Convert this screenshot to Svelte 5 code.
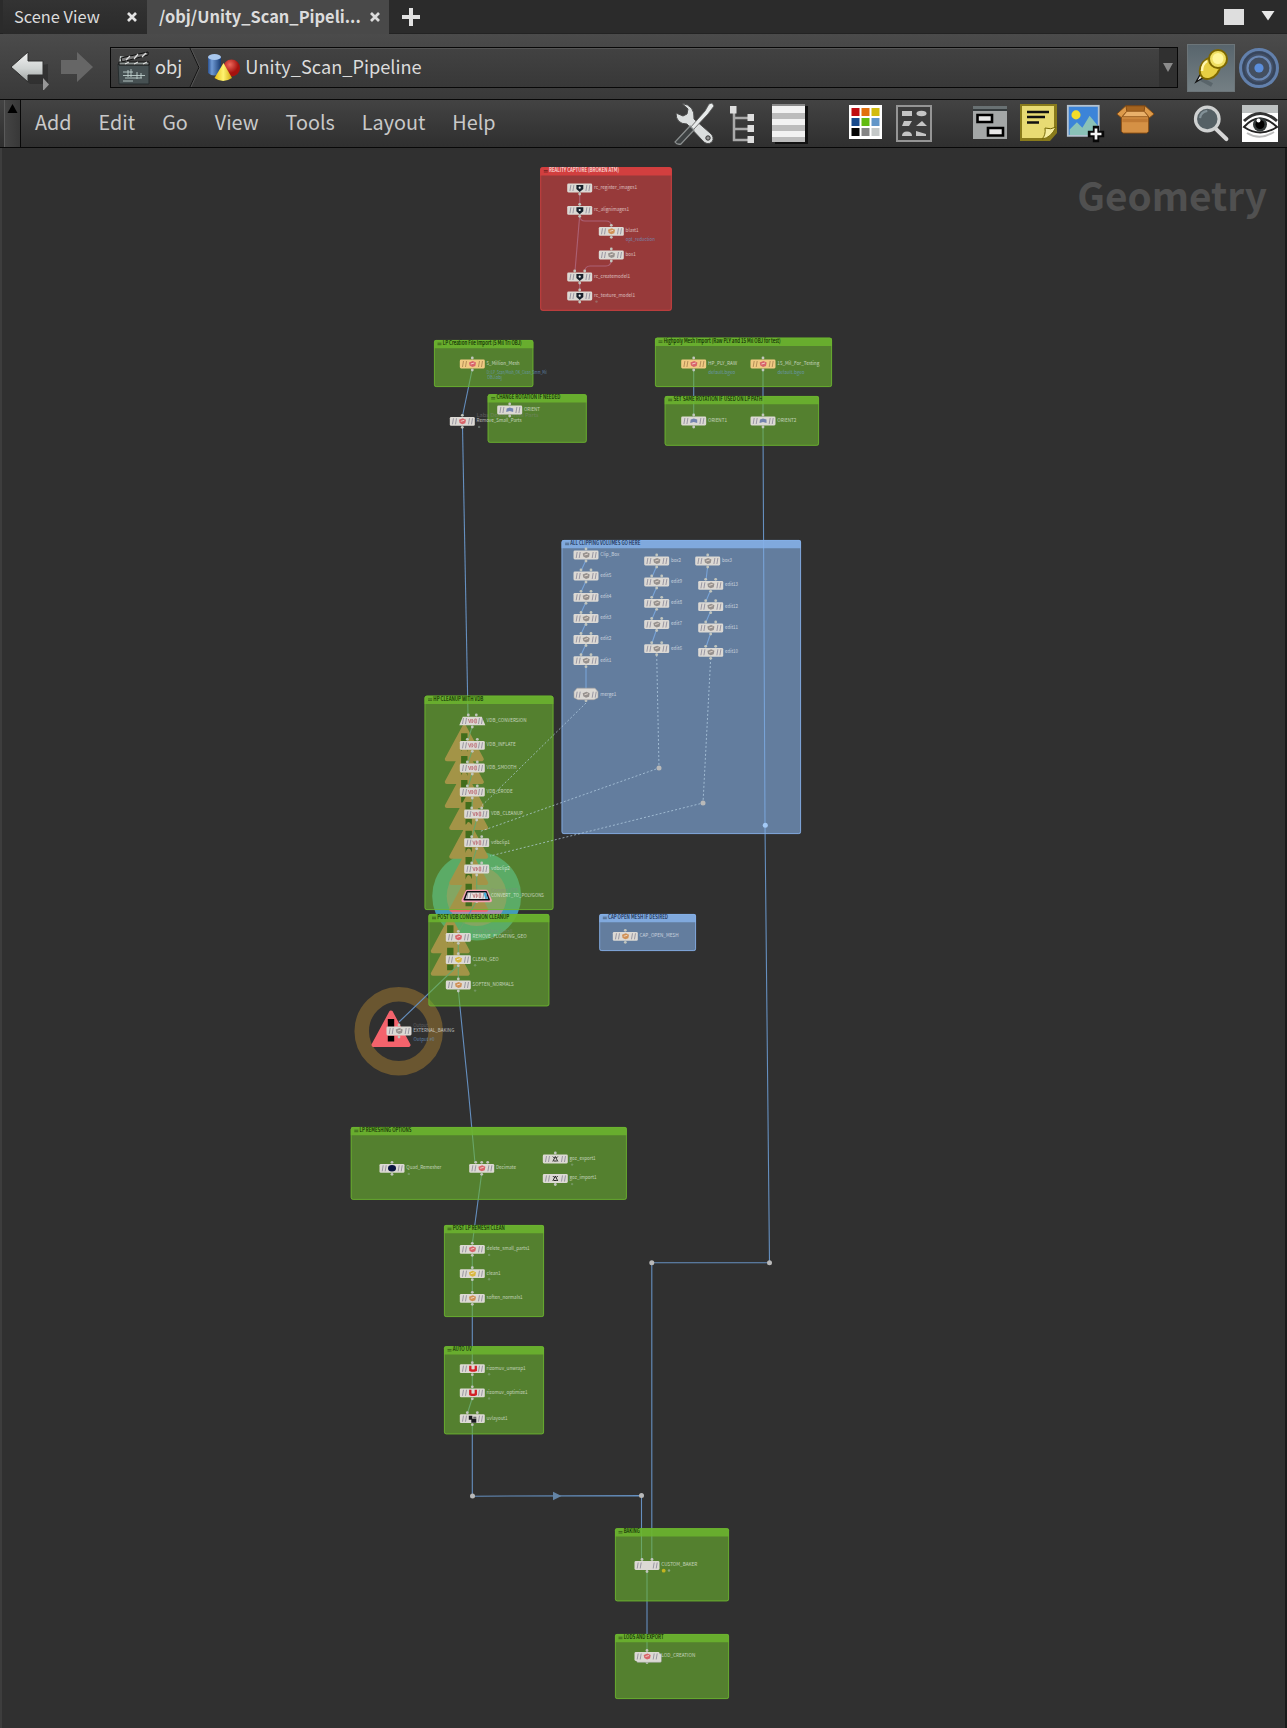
<script>
    const menus = ["Add", "Edit", "Go", "View", "Tools", "Layout", "Help"];

    const palette = [
        "#c00d10", "#e2700c", "#d3bb0e",
        "#184a8c", "#62bb10", "#6296c8",
        "#050505", "#858585", "#c4c8c8",
    ];

    const tints = { green: "#6cb52e", blue: "#85b0e8", red: "#dc4141" };

    // x, y, width, height, title, title width
    const boxes = [
        { x: 540.3, y: 167.3, w: 131.4, h: 143.4, tint: "red", title: "REALITY CAPTURE (BROKEN ATM)", tw: 70 },
        { x: 434, y: 340, w: 99.3, h: 47, tint: "green", title: "LP Creation File Import (5 Mil Tri OBJ)", tw: 79 },
        { x: 487.7, y: 394.3, w: 99, h: 48.4, tint: "green", title: "CHANGE ROTATION IF NEEDED", tw: 64 },
        { x: 655, y: 337.7, w: 177, h: 49.3, tint: "green", title: "Highpoly Mesh Import (Raw PLY and 15 Mil OBJ for test)", tw: 117 },
        { x: 664.7, y: 396, w: 154.3, h: 49.7, tint: "green", title: "SET SAME ROTATION IF USED ON LP PATH", tw: 89 },
        { x: 561.6, y: 540, w: 239.4, h: 294, tint: "blue", title: "ALL CLIPPING VOLUMES GO HERE", tw: 70 },
        { x: 424.6, y: 695.7, w: 128.8, h: 214.3, tint: "green", title: "HP CLEANUP WITH VDB", tw: 50 },
        { x: 428.5, y: 914, w: 120.8, h: 92.3, tint: "green", title: "POST VDB CONVERSION CLEANUP", tw: 72 },
        { x: 599.3, y: 914, w: 96.7, h: 37, tint: "blue", title: "CAP OPEN MESH IF DESIRED", tw: 60 },
        { x: 350.8, y: 1127, w: 276, h: 72.8, tint: "green", title: "LP REMESHING OPTIONS", tw: 52 },
        { x: 444, y: 1225, w: 100, h: 92, tint: "green", title: "POST LP REMESH CLEAN", tw: 52 },
        { x: 444, y: 1346.3, w: 100, h: 88, tint: "green", title: "AUTO UV", tw: 19 },
        { x: 615, y: 1528.3, w: 114, h: 73, tint: "green", title: "BAKING", tw: 16 },
        { x: 615, y: 1634, w: 114, h: 65, tint: "green", title: "LODS AND EXPORT", tw: 40 },
    ];

    // x, y of the node, name, name width, icon colour, offsets of the inputs
    const nodes = [
        { x: 579.7, y: 188, name: "rc_register_images1", nw: 43, icon: "dark", ins: [] },
        { x: 579.7, y: 210.3, name: "rc_alignimages1", nw: 35, icon: "dark" },
        { x: 611.3, y: 231.3, name: "blast1", nw: 13, icon: "orange", sub: "opt_reduction", sw: 29 },
        { x: 611.3, y: 255, name: "box1", nw: 10, icon: "grey" },
        { x: 579.7, y: 277, name: "rc_createmodel1", nw: 36, icon: "dark", ins: [-5, 5] },
        { x: 579.7, y: 296, name: "rc_texture_model1", nw: 41, icon: "dark", tag: true },
        { x: 472.3, y: 364, name: "5_Million_Mesh", nw: 33, icon: "red", file: true, sub: "D:/LP_Scan/Mesh_OK_Clean_5mm_Mil", sw: 60 },
        { x: 462.3, y: 421.3, name: "Remove_Small_Parts", nw: 45, icon: "red", type: "Labs Delete Small Parts", typeW: 62, tag: true },
        { x: 509.7, y: 410, name: "ORIENT", nw: 16, icon: "blue" },
        { x: 693.7, y: 364, name: "HP_PLY_RAW", nw: 29, icon: "red", file: true, sub: "default.bgeo", sw: 27 },
        { x: 763, y: 364, name: "15_Mil_For_Testing", nw: 42, icon: "red", file: true, sub: "default.bgeo", sw: 27 },
        { x: 693.7, y: 421, name: "ORIENT1", nw: 19, icon: "blue" },
        { x: 763, y: 421, name: "ORIENT2", nw: 19, icon: "blue" },
        { x: 586, y: 555, name: "Clip_Box", nw: 19, icon: "grey" },
        { x: 586, y: 576, name: "edit5", nw: 11, icon: "grey", ins: [-5, 5] },
        { x: 586, y: 597.3, name: "edit4", nw: 11, icon: "grey", ins: [-5, 5] },
        { x: 586, y: 618.5, name: "edit3", nw: 11, icon: "grey", ins: [-5, 5] },
        { x: 586, y: 639.5, name: "edit2", nw: 11, icon: "grey", ins: [-5, 5] },
        { x: 586, y: 660.7, name: "edit1", nw: 11, icon: "grey", ins: [-5, 5] },
        { x: 586, y: 694.7, name: "merge1", nw: 16, icon: "grey", shape: "merge", ins: [] },
        { x: 656.7, y: 561, name: "box2", nw: 10, icon: "grey" },
        { x: 656.7, y: 582, name: "edit9", nw: 11, icon: "grey", ins: [-5, 5] },
        { x: 656.7, y: 603.3, name: "edit8", nw: 11, icon: "grey", ins: [-5, 5] },
        { x: 656.7, y: 624.5, name: "edit7", nw: 11, icon: "grey", ins: [-5, 5] },
        { x: 656.7, y: 648.7, name: "edit6", nw: 11, icon: "grey", ins: [-5, 5] },
        { x: 707.7, y: 561, name: "box3", nw: 10, icon: "grey" },
        { x: 710.7, y: 585.3, name: "edit13", nw: 13, icon: "grey", ins: [-5, 5] },
        { x: 710.7, y: 606.7, name: "edit12", nw: 13, icon: "grey", ins: [-5, 5] },
        { x: 710.7, y: 628, name: "edit11", nw: 13, icon: "grey", ins: [-5, 5] },
        { x: 710.7, y: 652.3, name: "edit10", nw: 13, icon: "grey", ins: [-5, 5] },
        { x: 472.3, y: 721, name: "VDB_CONVERSION", nw: 40, icon: "vdb", shape: "trapezoid", ins: [-4, 4] },
        { x: 472.3, y: 745.3, name: "VDB_INFLATE", nw: 29, icon: "vdb", warn: true, ins: [-5, 5] },
        { x: 472.3, y: 768, name: "VDB_SMOOTH", nw: 30, icon: "vdb", warn: true, ins: [-5, 5] },
        { x: 472.3, y: 792, name: "VDB_ERODE", nw: 26, icon: "vdb", warn: true, ins: [-5, 5] },
        { x: 476.7, y: 814, name: "VDB_CLEANUP", nw: 32, icon: "vdb", warn: true, ins: [-5, 5] },
        { x: 476.7, y: 842.7, name: "vdbclip1", nw: 19, icon: "vdb", warn: true, ins: [-5, 5] },
        { x: 476.7, y: 869, name: "vdbclip2", nw: 19, icon: "vdb", warn: true, ins: [-5, 5] },
        { x: 476.7, y: 895.7, name: "CONVERT_TO_POLYGONS", nw: 53, icon: "vdb", shape: "selected", warn: true, type: "Convert VDB", typeW: 27, ins: [] },
        { x: 458.3, y: 937.3, name: "REMOVE_FLOATING_GEO", nw: 54, icon: "red", warn: true, type: "Labs Delete Small", typeW: 40 },
        { x: 458.3, y: 959.7, name: "CLEAN_GEO", nw: 26, icon: "yellow", warn: true, tag: true },
        { x: 458.3, y: 985, name: "SOFTEN_NORMALS", nw: 41, icon: "orange", tag: true },
        { x: 399, y: 1031, name: "EXTERNAL_BAKING", nw: 41, icon: "grey", warn: true, type: "Output", typeW: 15, sub: "Output #0", sw: 21 },
        { x: 625.3, y: 936.3, name: "CAP_OPEN_MESH", nw: 39, icon: "orange" },
        { x: 392, y: 1168.3, name: "Quad_Remesher", nw: 35, icon: "navy", tag: true },
        { x: 481.7, y: 1168.3, name: "Decimate", nw: 20, icon: "red", ins: [-6, 0, 6] },
        { x: 555.3, y: 1159, name: "goz_export1", nw: 26, icon: "black", tag: true, outs: false },
        { x: 555.3, y: 1178.5, name: "goz_import1", nw: 27, icon: "black", tag: true, ins: [] },
        { x: 472.3, y: 1249.3, name: "delete_small_parts1", nw: 43, icon: "red", tag: true },
        { x: 472.3, y: 1273.7, name: "clean1", nw: 14, icon: "yellow", tag: true },
        { x: 472.3, y: 1298.3, name: "soften_normals1", nw: 36, icon: "orange" },
        { x: 472.3, y: 1368.7, name: "rizomuv_unwrap1", nw: 39, icon: "magnet", tag: true },
        { x: 472.3, y: 1392.8, name: "rizomuv_optimize1", nw: 41, icon: "magnet", tag: true },
        { x: 472.3, y: 1418.7, name: "uvlayout1", nw: 21, icon: "layout", ins: [-5, 5] },
        { x: 647, y: 1565.5, name: "CUSTOM_BAKER", nw: 36, icon: "none", ins: [-5, 5] },
        { x: 647, y: 1656.5, name: "LOD_CREATION", nw: 34, icon: "red", shape: "stack" },
    ];

    const iconColors = {
        orange: "#cf9055", grey: "#96918e", red: "#d8646a", yellow: "#d9b740",
    };

    const wires = [
        "M579.7 193V206", "M579.7 215.5L575 271", "M579.7 216Q580 221 585 221H606Q611 221 611.3 226",
        "M611.3 260Q611 266 606 266H590Q585 266 584.7 272", "M579.7 282V291",
        "M472.3 369L462.5 416", "M462.5 427L468 716",
        "M693.7 369V416", "M763 369V416", "M763 426L765 825.3L769.5 1262.8H651.8V1560",
        "M586 560L581 571M586 581L581 592M586 602L581 613M586 623L581 634M586 644L581 655M586 666V689",
        "M656.7 566L652 577M656.7 587L652 598M656.7 608L652 619M656.7 629L652 643",
        "M707.7 566L706 580M710.7 590L706 601M710.7 611L706 622M710.7 633L706 647",
        "M472.3 726L468 740M472.3 750L468 763M472.3 773L468 787M472.3 797L472 809M476.7 819L472 837M476.7 848L472 864M476.7 874V890M476.7 901L458.3 932",
        "M458.3 943V955", "M458.3 965V980", "M458.3 965L399 1022",
        "M458.3 990L468.3 1090L475 1163", "M481.7 1173L472.3 1244",
        "M472.3 1255V1269M472.3 1279V1293M472.3 1303V1363M472.3 1374V1387M472.3 1398L467.5 1413",
        "M472.3 1424V1496.2L641.5 1495.6V1560", "M647 1571V1651",
    ];

    const dotted = [
        "M586 703L481 806.5",
        "M656.7 655L659 768L480 831.5",
        "M710.7 658L703 803L490 856",
    ];

    const pins = [
        { x: 659, y: 768 }, { x: 703, y: 803 }, { x: 765.3, y: 825.3, on: true },
        { x: 769.5, y: 1262.8 }, { x: 651.8, y: 1262.8 },
        { x: 472.5, y: 1496 }, { x: 641.5, y: 1495.6 },
    ];

    const warned = nodes.filter((n) => n.warn);
</script>

<div class="pane">
    <div class="tabs">
        <div class="tab">
            <span>Scene View</span>
            <svg width="10" height="10" viewBox="0 0 10 10"><path d="M1 1L9 9M9 1L1 9" stroke="#e4e4e4" stroke-width="2.7" /></svg>
        </div>
        <div class="tab active">
            <span>/obj/Unity_Scan_Pipeli...</span>
            <svg width="10" height="10" viewBox="0 0 10 10"><path d="M1 1L9 9M9 1L1 9" stroke="#dcdcdc" stroke-width="2.7" /></svg>
        </div>
        <svg class="plus" width="20" height="20" viewBox="0 0 20 20"><path d="M10 1V19M1 10H19" stroke="#e2e2e2" stroke-width="4" /></svg>
        <svg class="corner" width="52" height="18" viewBox="0 0 52 18">
            <rect x="1" y="1" width="20" height="16" fill="#dedede" />
            <path d="M38.5 3H51.5L45 12.5Z" fill="#e8e8e8" />
        </svg>
    </div>

    <div class="pathbar">
        <svg class="arrows" width="86" height="44" viewBox="0 0 86 44">
            <defs>
                <linearGradient id="back" x1="0" y1="0" x2="0" y2="1">
                    <stop offset="0" stop-color="#f2f2f2" />
                    <stop offset=".55" stop-color="#cfd3d2" />
                    <stop offset="1" stop-color="#9ea3a2" />
                </linearGradient>
            </defs>
            <path d="M4 24L20 38H38V18Z" fill="#222" opacity=".45" />
            <path d="M1 21L18 6V15H33V29H18V36Z" fill="url(#back)" stroke="#303030" stroke-width="1" />
            <path d="M83 21L67 6V14H51V28H67V36Z" fill="#666" />
            <path d="M33 32V45L39 38.500Z" fill="#979797" />
        </svg>
        <div class="path">
            <svg width="34" height="34" viewBox="0 0 34 34">
                <path d="M1 13H32V33H2Z" fill="#465052" stroke="#262d2e" />
                <path d="M2 13L3 5L8 6L12 13Z" fill="#c4cbca" />
                <path d="M4 7L31 1V4L5 11Z" fill="#777" stroke="#0d0d0d" />
                <path d="M9 9L13 5M17 8L21 3M25 6L29 2" stroke="#ddd" stroke-width="1.3" />
                <path d="M2 11H32V14H2Z" fill="#8b9290" stroke="#111" />
                <path d="M8 13L12 11M17 13L21 11M26 13L30 11" stroke="#eee" />
                <path d="M6 21H16M6 24.500H28M8 27H25M6 30H16M11 19V26M14 18V26M20 21V28M24 22V27" stroke="#bfd0ce" stroke-width=".9" />
            </svg>
            <span>obj</span>
            <svg class="chevron" width="12" height="39" viewBox="0 0 12 39"><path d="M1 0L10 19.500L1 39" fill="none" stroke="#111" /><path d="M2 0L11 19.500L2 39" fill="none" stroke="#555" /></svg>
            <svg class="shapes" width="34" height="30" viewBox="0 0 34 30">
                <defs>
                    <linearGradient id="cyl"><stop offset="0" stop-color="#2b5291" /><stop offset=".3" stop-color="#6f9ad4" /><stop offset="1" stop-color="#173a70" /></linearGradient>
                    <radialGradient id="ball" cx=".4" cy=".3"><stop offset="0" stop-color="#ef6a5c" /><stop offset="1" stop-color="#a5120e" /></radialGradient>
                    <linearGradient id="cone"><stop offset="0" stop-color="#e8bd12" /><stop offset=".5" stop-color="#fff370" /><stop offset="1" stop-color="#d2a90e" /></linearGradient>
                </defs>
                <path d="M1 4V20Q7 25 14 20V4Z" fill="url(#cyl)" />
                <ellipse cx="7.500" cy="4" rx="6.500" ry="3" fill="#a9c8ee" />
                <circle cx="24.500" cy="15" r="8.500" fill="url(#ball)" />
                <path d="M16.500 10L25 25Q16 31 7.500 25Z" fill="url(#cone)" />
            </svg>
            <span>Unity_Scan_Pipeline</span>
            <div class="drop"><svg width="10" height="9" viewBox="0 0 10 9"><path d="M0 0H10L5 9Z" fill="#8b8b8b" /></svg></div>
        </div>
        <div class="pin">
            <svg width="46" height="46" viewBox="0 0 46 46">
                <path d="M13 34L24 40" stroke="#4c575d" stroke-width="4" opacity=".6" />
                <path d="M8 37L13 28L18 31Z" fill="#eee" stroke="#111" stroke-width="1.3" />
                <ellipse cx="22" cy="23" rx="9" ry="12" transform="rotate(38 22 23)" fill="#e7cf43" stroke="#7e6800" stroke-width="2" />
                <path d="M20 16L30 25L34 19L26 10Z" fill="#dcc238" />
                <circle cx="30" cy="14" r="9" fill="#f0df62" stroke="#7e6800" stroke-width="2" />
                <circle cx="30" cy="13.500" r="5.500" fill="#fff59a" />
                <path d="M14 26Q14 19 19 16" fill="none" stroke="#fff7b0" stroke-width="2.500" />
            </svg>
        </div>
        <svg class="target" width="42" height="42" viewBox="0 0 42 42">
            <circle cx="21" cy="21" r="18.500" fill="#435066" stroke="#6280ac" stroke-width="3" />
            <circle cx="21" cy="21" r="15.500" fill="none" stroke="#37455c" stroke-width="2" />
            <circle cx="21" cy="21" r="11.500" fill="none" stroke="#6b88b4" stroke-width="2.200" />
            <circle cx="21" cy="21" r="10" fill="#444f60" />
            <circle cx="21" cy="21" r="4.600" fill="#5b8edb" />
        </svg>
    </div>

    <div class="menubar">
        <div class="grip"><svg width="12" height="10" viewBox="0 0 12 10"><path d="M5.500 0L10.500 9H.5Z" fill="#000" /></svg></div>
        <nav>
            {#each menus as menu}
                <span>{menu}</span>
            {/each}
        </nav>
        <div class="tools">
            <div class="group">
                <svg width="40" height="44" viewBox="0 0 40 44">
                    <path d="M8 1.500L14 7L13 12L9 14L2 11Q2 22 13 22L28 38Q33 44 38 40Q41 35 36 31L20 17Q21 3 8 1.500Z" fill="#dcdfdf" stroke="#4a4a4a" stroke-width="1" />
                    <circle cx="34" cy="36" r="2.200" fill="#999" stroke="#333" />
                    <path d="M38 1L35 2L31 9L16 26L19 28L34 12L40 4Z" fill="#e7eaea" stroke="#555" stroke-width=".8" />
                    <path d="M16 24L20 28L7 42Q3 43 1 40Z" fill="#3d4142" stroke="#8b8f8f" stroke-width="1.300" />
                </svg>
                <svg width="40" height="44" viewBox="0 0 40 44">
                    <path d="M12 10V38H26M12 16H26M12 27H26" fill="none" stroke="#aaa" stroke-width="2.500" />
                    <path d="M8 4H14.500V11.500H8ZM25.500 12H32V19H25.500ZM25.500 23H32V30H25.500ZM25.500 34H32V41H25.500Z" fill="#dedede" />
                </svg>
                <svg width="40" height="44" viewBox="0 0 40 44">
                    <rect x="4" y="4" width="33" height="38" fill="#111" />
                    <rect x="1" y="2" width="33" height="38" fill="#f2f2f2" />
                    <path d="M1 11H34V17H1ZM1 23H34V29H1ZM1 35H34V40H1Z" fill="#bcbcbc" />
                    <rect x="1" y="2" width="33" height="2" fill="#8a8a8a" />
                </svg>
            </div>
            <div class="group">
                <svg width="40" height="44" viewBox="0 0 40 44">
                    <rect x="3" y="3" width="33" height="34" fill="#fff" />
                    {#each palette as color, i}
                        <rect x={5.5 + (i % 3) * 10} y={6 + Math.floor(i / 3) * 10} width="8" height="8" fill={color} />
                    {/each}
                </svg>
                <svg width="40" height="44" viewBox="0 0 40 44">
                    <rect x="3" y="4" width="34" height="35" fill="#3c3c3c" stroke="#959595" stroke-width="2" />
                    <path d="M8 9H18V14H8ZM10 19H18L15 24H8ZM28 19L33 24H22ZM8 34Q8 29.500 13 29.500Q18 29.500 18 34ZM22 29L32 32V34H22Z" fill="#c5c5c5" />
                    <ellipse cx="27.500" cy="11.500" rx="5" ry="2.800" fill="#c5c5c5" />
                </svg>
            </div>
            <div class="group">
                <svg width="40" height="44" viewBox="0 0 40 44">
                    <rect x="4" y="4" width="34" height="33" fill="#a4a7a7" />
                    <rect x="4" y="4" width="34" height="3" fill="#697173" />
                    <rect x="4" y="7" width="34" height="2" fill="#353b3d" />
                    <path d="M8.500 13H23V20H8.500ZM19 26H34V33.500H19Z" fill="#e8e8e8" stroke="#000" stroke-width="2.600" />
                </svg>
                <svg width="40" height="44" viewBox="0 0 40 44">
                    <path d="M2 2H39V31L32 39H2Z" fill="#897b1c" />
                    <path d="M4 4H36V27L28 36H4Z" fill="#e8db73" />
                    <path d="M24 37Q28 33 27 26Q33 28 38 25Q33 36 24 37Z" fill="#f5eda0" stroke="#766906" />
                    <path d="M9 10H31M9 15H27M9 20.500H21" stroke="#111" stroke-width="2.300" />
                </svg>
                <svg width="44" height="44" viewBox="0 0 44 44">
                    <rect x="2" y="2" width="34" height="33" fill="#3c84d8" stroke="#b4c2cf" stroke-width="2" />
                    <circle cx="11" cy="12" r="5" fill="#f3dc28" />
                    <path d="M4 33V28L12 20L18 26L26 13L35 24V34H4Z" fill="#8ac2b8" />
                    <path d="M33 24V42M24 33H42" stroke="#080808" stroke-width="7" />
                    <path d="M33 27V39M27 33H39" stroke="#f5f5f5" stroke-width="3" />
                </svg>
                <svg width="44" height="44" viewBox="0 0 44 44">
                    <path d="M12 2H33L38 12H7Z" fill="#a5641f" stroke="#7f4811" />
                    <path d="M7 13H37V30L35 32H9L7 30Z" fill="#d59145" stroke="#874b10" />
                    <path d="M12 2L2 11L7 15L13 8ZM33 2L43 11L38 15L32 8Z" fill="#dd9a4a" stroke="#7f4811" />
                    <path d="M13 8H32L37 14H8Z" fill="#e9b06a" stroke="#92551b" />
                    <path d="M8 16H36V20H8Z" fill="#c07a33" />
                </svg>
            </div>
            <div class="group">
                <svg width="44" height="44" viewBox="0 0 44 44">
                    <path d="M27 26L40 38.500" stroke="#d6d6d6" stroke-width="4.500" stroke-linecap="round" />
                    <circle cx="19" cy="16.500" r="13" fill="#556065" stroke="#cfd1d1" stroke-width="3.500" />
                    <path d="M11 15.500Q12 8.500 19 7.500" fill="none" stroke="#829097" stroke-width="2.500" />
                </svg>
                <svg width="40" height="44" viewBox="0 0 40 44">
                    <rect x="4" y="3" width="36" height="37" fill="#fff" />
                    <rect x="4" y="3" width="36" height="8" fill="#bdc1c1" />
                    <path d="M6 19Q22 4 39 19" fill="none" stroke="#333" stroke-width="3" />
                    <path d="M6 25Q21 8 39 25Q22 36 6 25Z" fill="#f7f7f7" stroke="#222" stroke-width="2" />
                    <circle cx="22" cy="22.500" r="7" fill="#343a3a" />
                    <circle cx="22" cy="22.500" r="4.500" fill="#000" />
                    <circle cx="20.500" cy="18.500" r="2" fill="#fff" />
                    <path d="M9 31Q22 39 36 30" fill="none" stroke="#bbb" stroke-width="2" />
                </svg>
            </div>
        </div>
    </div>

    <main>
        <svg class="graph" viewBox="0 148 1287 1580">
            <circle cx="398.700" cy="1031.300" r="37" fill="none" stroke="#6a5630" stroke-width="14.500" />
            <circle cx="476.700" cy="896" r="44.500" fill="#439bb8" />
            <circle cx="476.700" cy="896" r="30" fill="#a68fae" />

            {#each warned as n}
                <g transform="translate({n.x - 8} {n.y})">
                    <path d="M0 -18.500L17.500 14H-17.500Z" fill="#f4636c" stroke="#f4636c" stroke-width="4" stroke-linejoin="round" />
                    <path d="M-3.200 -12H3.200V2H-3.200ZM-3.200 4.700H3.200V10.500H-3.200Z" fill="#000" />
                </g>
            {/each}

            {#each wires as d}
                <path {d} class="wire" />
            {/each}
            <path d="M553 1491.700L561.500 1496L553 1500.300Z" fill="#6484a5" />

            {#each boxes as b}
                <g>
                    <rect x={b.x} y={b.y} width={b.w} height={b.h} rx="2" fill={tints[b.tint]} fill-opacity=".6" />
                    <path d="M{b.x} {b.y + 8.3}V{b.y + 2}q0 -2 2 -2H{b.x + b.w - 2}q2 0 2 2V{b.y + 8.3}Z" fill={tints[b.tint]} fill-opacity=".85" />
                    <rect x={b.x + 0.4} y={b.y + 0.4} width={b.w - 0.8} height={b.h - 0.8} rx="2" fill="none" stroke={tints[b.tint]} stroke-width=".8" />
                    <path d="M{b.x + 3.5} {b.y + 3.2}h4M{b.x + 3.5} {b.y + 4.7}h4" stroke="#000" stroke-opacity=".55" stroke-width=".7" />
                    <text class="title {b.tint}" x={b.x + 8.7} y={b.y + 5} textLength={b.tw} lengthAdjust="spacingAndGlyphs">{b.title}</text>
                </g>
            {/each}

            {#each dotted as d}
                <path {d} class="dotted" />
            {/each}
            {#each pins as p}
                <circle cx={p.x} cy={p.y} r="2.500" fill={p.on ? "#a3c9f5" : "#b9b9b9"} />
            {/each}

            {#each nodes as n}
                <g transform="translate({n.x} {n.y})">
                    {#each n.ins ?? [0] as dx}
                        <circle cx={dx} cy="-6" r="1.400" class="plug" />
                    {/each}
                    {#if n.outs !== false}
                        <circle cy="6" r="1.400" class="plug" />
                    {/if}
                    {#if n.shape === "trapezoid"}
                        <path d="M-9.500 -4.300H9.500L13 4.300H-13Z" class="body" />
                    {:else if n.shape === "merge"}
                        <path d="M-9 -6.500H9L12 -3V3L8 5H-8L-12 3V-3Z" class="body" stroke="#aaa59f" stroke-width=".6" />
                    {:else if n.shape === "selected"}
                        <path d="M-9.500 -4.300H9.500L13.500 4.800H-13.500Z" fill="#e8e4e4" stroke="#f5a3b4" stroke-width="3.500" stroke-linejoin="round" />
                        <path d="M-9.500 -4H9.500L12.500 4H-12.500Z" fill="#e8e4e4" stroke="#0c0c14" stroke-width="1.500" stroke-linejoin="round" />
                        <path d="M7 -3H9L11.500 3H8.500Z" fill="#37b4e6" />
                    {:else}
                        {#if n.shape === "stack"}
                            <rect x="-10.500" y="-2.900" width="25" height="8.800" rx="1.300" class="body" stroke="#7f8a78" stroke-width=".5" />
                        {/if}
                        <rect x="-12.500" y="-4.400" width="25" height="8.800" rx="1.300" class="body" class:file={n.file} />
                    {/if}
                    <path d="M-9.800 3L-8.800 -3M-6.800 3L-5.800 -3M6.200 3L7.200 -3M9.200 3L10.200 -3" stroke={n.file ? "#a5804c" : "#888596"} stroke-width=".8" />
                    {#if n.icon === "dark"}
                        <path d="M-3.300 -3H3.600V1L0 4L-3.300 1Z" fill="#17202a" />
                        <circle cy="-.3" r="1.100" fill="#e9eef0" />
                    {:else if n.icon === "navy"}
                        <ellipse rx="4" ry="3.300" fill="#0a1440" />
                    {:else if n.icon === "magnet"}
                        <path d="M-2 -3V1.500Q.7 2.500 3.500 1.500V-3" fill="none" stroke="#d21f26" stroke-width="2.300" />
                    {:else if n.icon === "layout"}
                        <path d="M-3.500 -3H0V0H4V4H-1V1H-3.500Z" fill="#1b1b1f" />
                        <path d="M1 -2H4V0H1Z" fill="#666" />
                    {:else if n.icon === "black"}
                        <path d="M-2.500 2.500L0 -2.500L2.500 2.500M-2.500 -2.500L-1 -1M2.500 -2.500L1 -1M-1.500 2H1.500" fill="none" stroke="#161616" stroke-width=".9" />
                    {:else if n.icon === "vdb"}
                        <path d="M-4 -2L-2.500 2L-1.500 -2M-.3 -2V2L1 0ZM2.500 -2V2H4V-2Z" fill="none" stroke="#c0787f" stroke-width=".9" />
                    {:else if n.icon === "blue"}
                        <path d="M-3.500 2L-3 -1.500L0 -2.500L3.500 -1.500V2L0 1Z" fill="#7484ae" />
                    {:else if n.icon !== "none"}
                        <path d="M-3.300 -1.500L.5 -3L3.700 -1.500L3 2L0 3L-2.700 1.600Z" fill={iconColors[n.icon]} />
                        <path d="M-1.500 0L2 -1" stroke="#f2e6dc" stroke-width=".8" />
                    {/if}
                    {#if n.type}
                        <text class="type" x="14.200" y="-4" textLength={n.typeW} lengthAdjust="spacingAndGlyphs">{n.type}</text>
                    {/if}
                    <text class="name" x="14.300" y=".8" textLength={n.nw} lengthAdjust="spacingAndGlyphs">{n.name}</text>
                    {#if n.sub}
                        <text class="sub" x="14.500" y="9.500" textLength={n.sw} lengthAdjust="spacingAndGlyphs">{n.sub}</text>
                    {/if}
                    {#if n.tag}
                        <circle cx="16.800" cy="5.600" r="1.200" fill="#9db5a8" opacity=".4" />
                    {/if}
                </g>
            {/each}
            <text class="sub" x="487" y="379.300" textLength="15" lengthAdjust="spacingAndGlyphs">OBJ.obj</text>
            <circle cx="663.700" cy="1570.700" r="1.900" fill="#c4b420" />
            <circle cx="669" cy="1570.500" r="1.200" fill="#8aa480" />
        </svg>
        <h1>Geometry</h1>
    </main>
</div>

<style>
    :global(body) {
        background: #303030;
    }

    .pane {
        width: 1287px;
        height: 1728px;
        overflow: hidden;
        box-sizing: border-box;
        display: flex;
        flex-direction: column;
        background: #303030;
        color: #dcdcdc;
        font-family: "Noto Sans CJK SC", "Open Sans", sans-serif;
        font-size: 16.4px;
        line-height: 1;
    }

    svg {
        display: block;
        flex: none;
    }

    .tabs {
        height: 34px;
        flex: none;
        display: flex;
        align-items: center;
        padding-left: 3px;
        background: #2b2b2b;
        border-bottom: 1px solid #232323;
        box-sizing: border-box;
    }

    .tab {
        height: 34px;
        width: 144px;
        box-sizing: border-box;
        padding: 0 10px 0 11px;
        display: flex;
        align-items: center;
        justify-content: space-between;
        background: linear-gradient(#333, #2a2a2a);
        white-space: nowrap;
    }

    .tab.active {
        width: 242px;
        height: 35px;
        padding: 0 9px 0 12px;
        background: #494949;
        font-weight: bold;
    }

    .plus {
        margin-left: 12px;
    }

    .corner {
        margin-left: auto;
        margin-right: 12px;
    }

    .pathbar {
        height: 65px;
        flex: none;
        box-sizing: border-box;
        display: flex;
        align-items: center;
        padding: 2px 7px 0 10px;
        background: linear-gradient(#4b4b4b, #393939);
    }

    .path {
        width: 1068px;
        height: 41px;
        box-sizing: border-box;
        margin-left: 14px;
        padding-left: 6px;
        display: flex;
        align-items: center;
        border: 1px solid #080808;
        background: linear-gradient(#424242, #383838);
        box-shadow: inset 0 1px #555;
    }

    .path span {
        margin: -3px 0 0 4px;
        font-size: 18.2px;
    }

    .chevron {
        margin-left: 7px;
    }

    .shapes {
        margin-left: 6px;
    }

    .drop {
        width: 18px;
        height: 39px;
        margin-left: auto;
        display: flex;
        align-items: center;
        justify-content: center;
        background: #303030;
    }

    .pin {
        margin-left: 10px;
        width: 46px;
        height: 46px;
        background: linear-gradient(#58656d, #747f84);
        box-shadow: 0 0 0 1px #6c7579;
    }

    .target {
        margin-left: 4px;
    }

    .menubar {
        height: 49px;
        flex: none;
        box-sizing: border-box;
        display: flex;
        align-items: center;
        border-top: 1px solid #080808;
        border-bottom: 1px solid #080808;
        background: linear-gradient(#434343, #2f2f2f);
    }

    .grip {
        width: 17px;
        height: 47px;
        box-sizing: border-box;
        margin-left: 4px;
        padding: 4px 0 0 2px;
        background: linear-gradient(90deg, #444, #383838);
        border-left: 1px solid #5a5a5a;
        border-right: 1px solid #080808;
    }

    nav {
        display: flex;
        gap: 27px;
        margin: -3px 0 0 14px;
        font-size: 19.8px;
        color: #c9c9c9;
    }

    .tools {
        margin-left: auto;
        margin-right: 9px;
        display: flex;
        gap: 35px;
    }

    .group {
        display: flex;
        gap: 8.5px;
    }

    .group svg {
        width: 40px;
        overflow: visible;
    }

    main {
        position: relative;
        height: 1580px;
        box-sizing: border-box;
        box-shadow: inset 2px 0 #3d3d3d, inset -2px 0 #1a1a1a;
    }

    .graph {
        width: 1287px;
        height: 1580px;
    }

    h1 {
        position: absolute;
        top: 27px;
        right: 20px;
        margin: 0;
        font-size: 38.7px;
        line-height: 1;
        color: #505050;
    }

    .wire {
        fill: none;
        stroke: #658fbf;
        stroke-width: 1.1;
    }

    .dotted {
        fill: none;
        stroke: #bcd6ea;
        stroke-width: 0.9;
        stroke-dasharray: 2 2;
        opacity: 0.75;
    }

    .plug {
        fill: #c2c6be;
    }

    .body {
        fill: #dcd9d4;
    }

    .file {
        fill: #f0ca83;
    }

    .title {
        font-size: 6px;
        font-weight: 500;
        fill: #0b2400;
    }

    .title.blue {
        fill: #0f2547;
    }

    .title.red {
        fill: #ffe4e0;
    }

    .name {
        font-size: 5.4px;
        fill: #fff;
        opacity: 0.62;
    }

    .type {
        font-size: 5px;
        fill: #888;
        opacity: 0.5;
    }

    .sub {
        font-size: 4.8px;
        fill: #6f9fce;
        opacity: 0.75;
    }
</style>
